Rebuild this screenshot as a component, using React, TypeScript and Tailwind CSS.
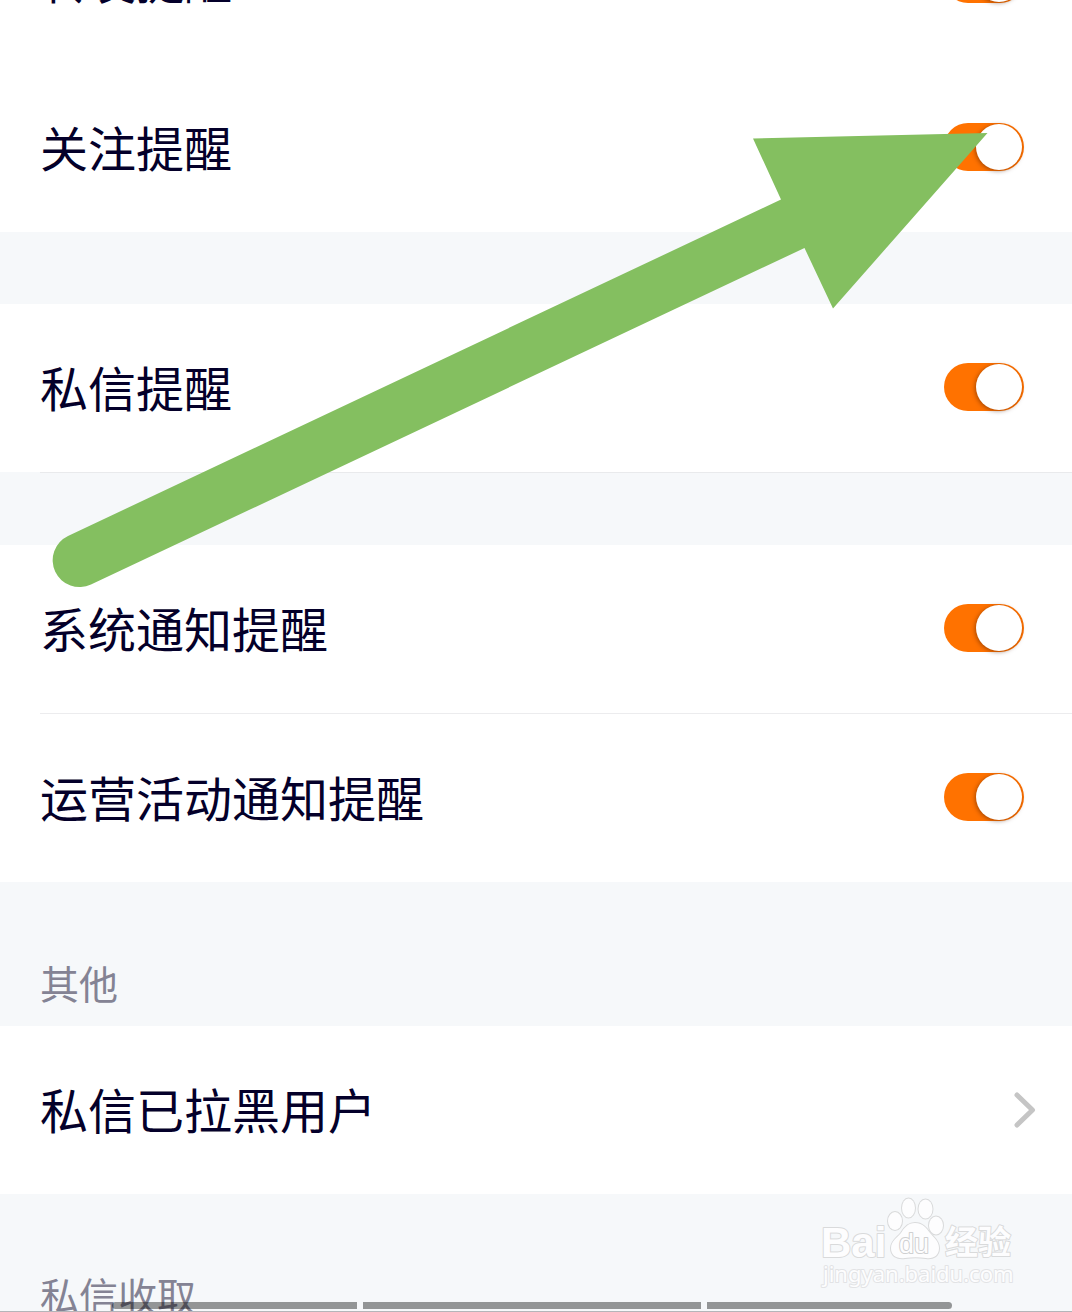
import React from 'react';

interface SwitchRowProps {
  id: string;
  label: string;
}

const SwitchRow: React.FC<SwitchRowProps> = ({ id, label }) => {
  return (
    <div className="flex h-42 shrink-0 items-center justify-between bg-white pr-12 pb-0.5 pl-10">
      <label htmlFor={id} className="pb-0.5 text-5xl text-[#04002a]">
        {label}
      </label>
      <input
        id={id}
        type="checkbox"
        role="switch"
        defaultChecked
        className="flex h-12 w-20 cursor-pointer appearance-none items-center rounded-full bg-gray-300 px-0.5 before:block before:size-[46px] before:rounded-full before:bg-white before:shadow-[-1px_1px_4px_rgba(80,30,0,0.5)] checked:justify-end checked:bg-[#ff7200]"
      />
    </div>
  );
};

const SectionTitle: React.FC<{ title: string }> = ({ title }) => (
  <h2 className="flex h-36 shrink-0 items-end px-10 pb-4 text-[39px] leading-14 text-[#848394]">{title}</h2>
);

const Arrow = () => (
  <svg
    className="pointer-events-none absolute top-0 left-0"
    width="1072"
    height="620"
    viewBox="0 0 1072 620"
    fill="#84bf60"
    aria-hidden="true"
  >
    <path d="M68 536 L781 199.500 L753 138.500 L987.500 133 L833 308.500 L804.500 248 L91 584.500 A26.500 26.500 0 0 1 68 536 Z" />
  </svg>
);

const Watermark = () => (
  <svg
    className="pointer-events-none absolute right-14 bottom-5"
    width="196"
    height="96"
    viewBox="0 0 196 96"
    fill="#fdfdfe"
    stroke="#d9dadb"
    strokeWidth="2"
    strokeLinejoin="round"
    style={{ paintOrder: 'stroke' }}
    aria-hidden="true"
  >
    <text x="1" y="61" fontSize="42" fontWeight="700" fontFamily="Liberation Sans, sans-serif">
      Bai
    </text>
    <ellipse cx="75" cy="25" rx="7" ry="9" />
    <ellipse cx="88.500" cy="12" rx="6.500" ry="9.500" />
    <ellipse cx="105.500" cy="13" rx="7" ry="9.500" />
    <ellipse cx="116" cy="29.500" rx="7" ry="9" />
    <path d="M95 27 C103 27 107 33 110 37 C114 42 119 45 119 52 C119 60 113 63 106 62 C99 61 92 61 85 62 C77 63 71 60 71 52 C71 45 77 42 81 37 C84 32 88 27 95 27 Z" />
    <text x="79" y="57" fontSize="27" fontWeight="400" fontFamily="Liberation Sans, sans-serif" stroke="#cfd0d1">
      du
    </text>
    <text x="125" y="58" fontSize="33" fontWeight="700" fontFamily="Noto Sans CJK SC, sans-serif">
      经验
    </text>
    <text x="3" y="86" fontSize="22" fontFamily="Noto Sans, sans-serif" stroke="#e2e3e5">
      jingyan.baidu.com
    </text>
  </svg>
);

const NavBar = () => (
  <div className="pointer-events-none absolute inset-x-0 bottom-0 border-b border-[#b4b5b9] pr-30 pb-0.5 pl-28">
    <div className="flex h-[7px] gap-1.5">
      <div className="grow-[245] rounded-l-full bg-black/40"></div>
      <div className="grow-[338] bg-black/40"></div>
      <div className="grow-[245] rounded-r-full bg-black/40"></div>
    </div>
  </div>
);

export default function App() {
  return (
    <main className="relative h-screen overflow-hidden bg-[#f6f8fa] font-['Noto_Sans_CJK_SC',sans-serif]">
      <div className="-mt-26 flex flex-col">
        <SwitchRow id="repost" label="转发提醒" />
        <SwitchRow id="follow" label="关注提醒" />
        <div className="h-18"></div>

        <SwitchRow id="message" label="私信提醒" />
        <div className="ml-10 h-px bg-[#e9eaec]"></div>
        <div className="h-18"></div>

        <SwitchRow id="system" label="系统通知提醒" />
        <div className="bg-white pl-10">
          <div className="h-px bg-[#ececee]"></div>
        </div>
        <SwitchRow id="campaign" label="运营活动通知提醒" />

        <SectionTitle title="其他" />
        <a href="#blocked" className="flex h-42 items-center justify-between bg-white pr-9 pl-10 text-5xl text-[#04002a]">
          <span className="pb-1">私信已拉黑用户</span>
          <svg width="22" height="38" viewBox="0 0 22 38" fill="none" stroke="#c5c5c5" strokeWidth="5" aria-hidden="true">
            <path d="M3 4 L18.500 19 L3 34" strokeLinecap="round" strokeLinejoin="round" />
          </svg>
        </a>

        <SectionTitle title="私信收取" />
      </div>

      <Arrow />
      <Watermark />
      <NavBar />
    </main>
  );
}
